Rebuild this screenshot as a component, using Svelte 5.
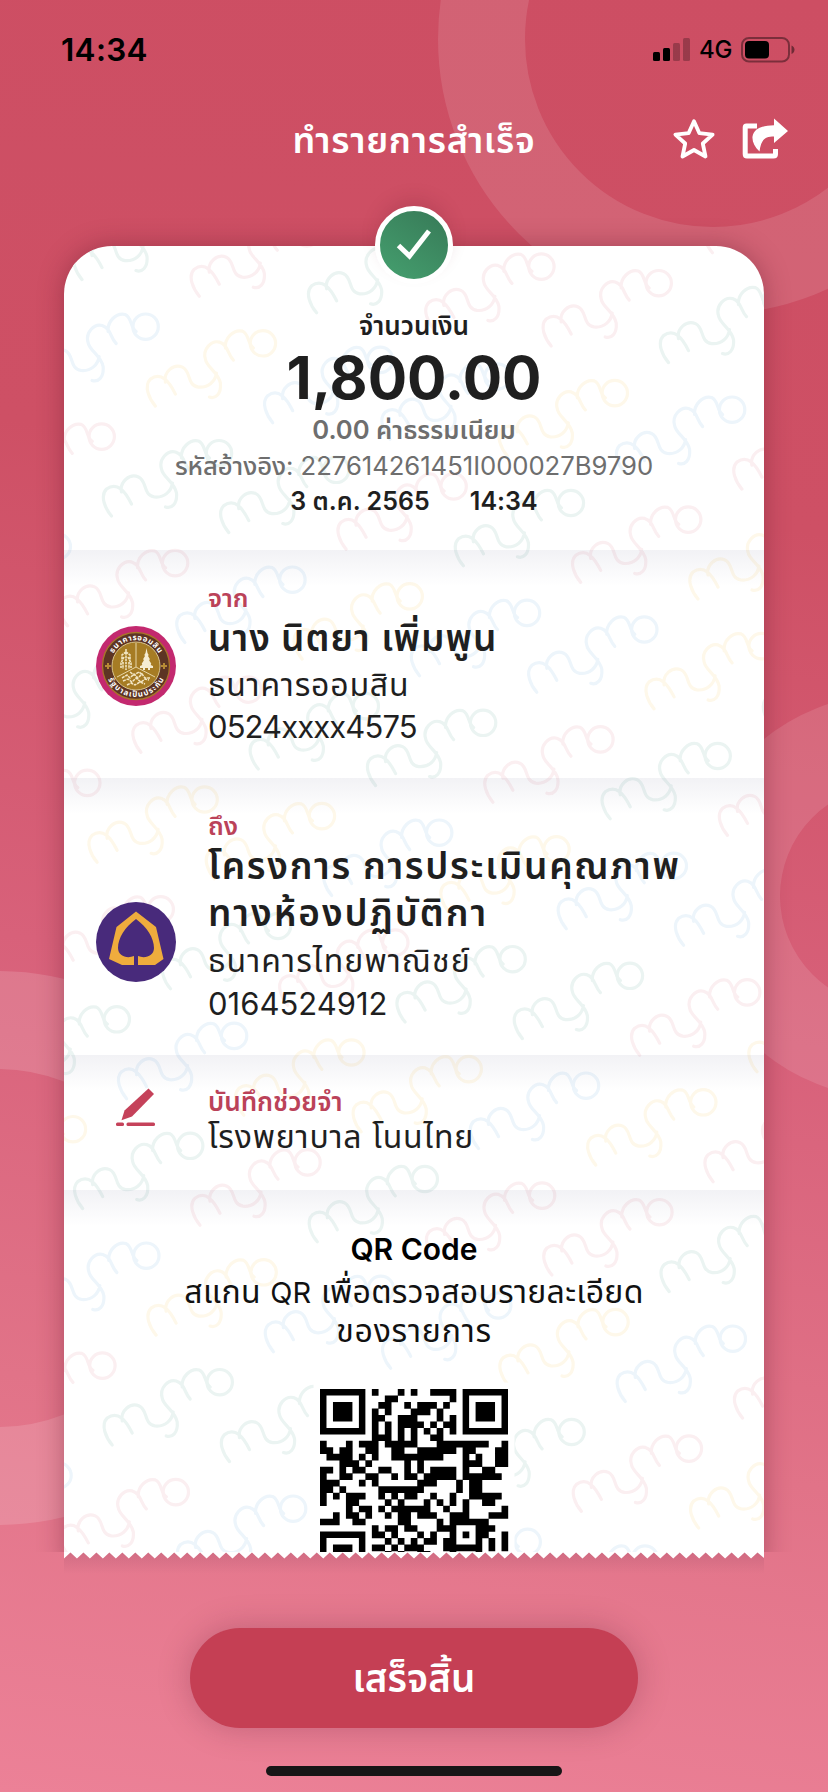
<script>
  // Watermark lattice: each mark sits at ORIGIN + m*A + n*B
  const ORIGIN = [472.8, 446.3];
  const A = [117.3, 16.6];
  const B = [-43.9, 109.9];
  const tones = { g: '#ebf4f2', p: '#fbeff1', b: '#edf5fb', y: '#fef8ea' };
  // Colour rows start at m = -7; the pattern repeats by (+3, +8)
  const toneRows = {
    '-3': 'bygpgppgby',
    '-2': 'gpbybbybpg',
    '-1': 'ygpggpgpyb',
    '0': 'ygbpbybbyg',
    '1': 'bpygpggpgp',
    '2': 'gbypyybybb',
    '3': 'ybpgpgpggp',
    '4': 'pybygbyyby'
  };
  function toneOf(m, n) {
    while (n > 4) { n -= 8; m -= 3; }
    while (n < -3) { n += 8; m += 3; }
    const row = toneRows[String(n)];
    return tones[row[(((m + 7) % 10) + 10) % 10]];
  }
  const marks = [];
  for (let n = -4; n <= 10; n++) {
    for (let m = -8; m <= 8; m++) {
      const x = ORIGIN[0] + m * A[0] + n * B[0];
      const y = ORIGIN[1] + m * A[1] + n * B[1];
      if (x > -130 && x < 720 && y > -20 && y < 1400) marks.push({ x, y, c: toneOf(m, n) });
    }
  }

  // Dark modules per row, between and beside the finder patterns
  const qrRows = [
    [8, 12, 14, 17, 18, 19, 20],
    [10, 11, 20],
    [9, 10, 13, 15, 16, 17, 19],
    [8, 10, 14, 15, 16, 18],
    [8, 9, 12, 13, 14, 18, 20],
    [8, 10, 12, 13, 14, 15, 17, 19, 20],
    [8, 10, 12, 14, 16, 18, 20],
    [8, 9, 10, 12, 14, 17, 18],
    [0, 4, 6, 7, 8, 10, 11, 12, 13, 14, 18, 19, 20, 21, 22, 23, 24, 25, 28],
    [0, 1, 3, 4, 7, 8, 11, 12, 15, 16, 17, 18, 19, 20, 22, 23, 27, 28],
    [1, 2, 3, 4, 6, 8, 11, 12, 13, 14, 15, 16, 17, 18, 22, 24, 27, 28],
    [3, 4, 5, 7, 13, 15, 22, 23, 24, 27, 28],
    [0, 1, 3, 5, 6, 9, 10, 13, 15, 17, 18, 19, 20, 22, 25, 26],
    [0, 3, 4, 7, 8, 11, 13, 14, 16, 17, 18, 19, 20, 22, 23, 24, 25, 26, 27],
    [0, 1, 2, 6, 8, 15, 16, 17, 21, 23, 24],
    [0, 1, 3, 9, 10, 11, 12, 13, 14, 15, 21, 23, 24],
    [0, 2, 4, 5, 6, 9, 11, 13, 14, 17, 20, 23, 24, 25, 26, 27],
    [0, 4, 5, 10, 12, 16, 18, 20, 22, 25, 26],
    [4, 6, 7, 9, 11, 12, 13, 14, 15, 16, 19, 22, 28],
    [2, 4, 5, 7, 10, 12, 13, 15, 16, 17, 20, 21, 22, 26, 27, 28],
    [0, 1, 2, 5, 6, 12, 13, 18, 20, 21, 22, 23, 24, 25],
    [8, 10, 11, 13, 14, 18, 19, 20, 24, 25, 26],
    [8, 9, 11, 15, 17, 20, 22, 24, 25, 28],
    [10, 12, 14, 16, 17, 19, 20, 24, 26, 28],
    [8, 9, 11, 13, 14, 15, 19, 20, 21, 22, 23, 24, 26, 28],
    [10, 12, 15, 16, 20, 24]
  ];
  const qrPath = qrRows.map((r, y) => r.map((x) => `M${x} ${y}h1.03v1.03h-1.03z`).join('')).join('');
  const finders = [[0, 0], [22, 0], [0, 22]];

  const teeth =
    'M0 0H700V6' +
    Array.from({ length: 54 }, (_, i) => {
      const right = 700 - i * 12.963;
      return `L${(right - 6.48).toFixed(2)} .6L${(right - 12.963).toFixed(2)} 6.4`;
    }).join('') +
    'Z';
</script>

<div class="screen">
  <svg class="rings" viewBox="0 0 828 1792" aria-hidden="true">
    <g fill="none" stroke="#fff" stroke-opacity=".115">
      <circle cx="713" cy="39" r="231.5" stroke-width="87" />
      <circle cx="891" cy="896" r="156.5" stroke-width="91" />
      <circle cx="-2" cy="1248" r="228" stroke-width="98" stroke-opacity=".14" />
    </g>
  </svg>

  <div class="status">
    <span class="clock">14:34</span>
    <div class="indicators">
      <svg width="38" height="24" viewBox="0 0 38 24">
        <rect x="0" y="14" width="7" height="9" rx="1.5" />
        <rect x="10" y="10" width="7" height="13" rx="1.5" />
        <rect x="20" y="5" width="7" height="18" rx="1.5" opacity=".25" />
        <rect x="30" y="0" width="7" height="23" rx="1.5" opacity=".25" />
      </svg>
      <span class="net">4G</span>
      <svg width="54" height="26" viewBox="0 0 54 26">
        <rect x="1" y="1" width="47" height="23.5" rx="7" fill="none" stroke="#000" stroke-opacity=".4" stroke-width="2" />
        <rect x="4" y="4" width="24" height="17.5" rx="4" />
        <path d="M50.500 8.500c4 1.500 4 7 0 8.500z" opacity=".45" />
      </svg>
    </div>
  </div>

  <header class="nav">
    <h1>ทำรายการสำเร็จ</h1>
    <div class="actions">
      <svg width="44" height="42" viewBox="0 0 44 42" fill="none" stroke="#fff" stroke-width="3.800" stroke-linejoin="round">
        <path d="M22 3.200L27.400 15.200L40.600 16.600L30.800 25.500L33.500 38.500L22 32L10.500 38.500L13.200 25.500L3.400 16.600L16.600 15.200Z" />
      </svg>
      <svg width="47" height="42" viewBox="0 0 47 42">
        <path d="M15 8H4.500Q3.200 8 3.200 9.500V36Q3.200 38 5 38H31.500Q33.500 38 33.500 36V31" fill="none" stroke="#fff" stroke-width="5" />
        <path d="M32 .5L46 13L32 25V18.500C24 18.500 19 20.500 17.500 33.500C12.500 29 10 23.500 10.500 18.500C12 10.500 20 7.500 32 7.300Z" fill="#fff" />
      </svg>
    </div>
  </header>

  <div class="stage">
    <div class="badge">
      <svg width="36" height="34" viewBox="0 0 36 34" fill="none" stroke="#fff" stroke-width="5">
        <path d="M2.500 17.500L13.500 28L33 3" />
      </svg>
    </div>

    <main class="card">
      <svg class="marks" width="700" height="1306" viewBox="0 0 700 1306" aria-hidden="true">
        <defs>
          <g id="mark" fill="none" stroke-width="3.200" stroke-linecap="round">
            <path d="M0 0C-6-7-12-20-5-27C6-35 14-24 20-12M10-24C8-34 18-43 27-39C36-35 31-21 43-19C53-18 60-25 61-33M50-47C51-39 63-34 65-23C66-12 60-7 54-9M50-47C47-57 56-66 64-64C73-61 72-52 78-46M70-58C69-68 78-77 87-75C94-72 92-62 98-58" />
            <circle cx="107.500" cy="-62.800" r="12.700" />
          </g>
        </defs>
        {#each marks as k}
          <use href="#mark" x={k.x} y={k.y} stroke={k.c} />
        {/each}
      </svg>

      <section class="summary">
        <p class="label">จำนวนเงิน</p>
        <p class="amount">1,800.00</p>
        <p class="fee">0.00 ค่าธรรมเนียม</p>
        <p class="ref"><b>รหัสอ้างอิง</b>: 227614261451I000027B9790</p>
        <p class="date"><span>3 ต.ค. 2565</span><span>14:34</span></p>
      </section>

      <section class="row from">
        <div class="logo">
          <svg width="80" height="80" viewBox="0 0 80 80">
            <defs>
              <path id="arcTop" d="M14 40A26 26 0 0 1 66 40" />
              <path id="arcBottom" d="M9 40A31 31 0 0 0 71 40" />
            </defs>
            <circle cx="40" cy="40" r="40" fill="#c3296f" />
            <circle cx="40" cy="40" r="33.500" fill="#5d3424" stroke="#a87528" stroke-width="1.300" />
            <circle cx="40" cy="40" r="24" fill="#a67c24" stroke="#d8c48e" stroke-width="1" />
            <path d="M40 17V41M40 41L21 51M40 41L59 51" stroke="#e6d6a8" stroke-width="1" fill="none" />
            <g fill="#f5ecd2">
              <path d="M50.500 22l1 5 1.200 2-.7 1 1.800 3-.6 1.500 2 3-.5 1.500 2.300 1v2H54l0 2h-2v-2h-3v2h-2v-2h-3v-2l2.300-1-.5-1.500 2-3-.6-1.500 1.800-3-.7-1 1.200-2z" />
            </g>
            <path d="M30 23v21M30 26l-4 3v5M30 26l4 3v5M28 31l-3 6v5M32 31l3 6v5M27 36v7M33 36v7" stroke="#f0e4c0" stroke-width="1.600" stroke-dasharray="2.500 .7" fill="none" />
            <path d="M26 52l5-3 3 3 4-4 4 4 4-4 3 4 5 0M27 55l5-2 4 3 4-4 5 4 4-3 4 1M31 59l4-2 4 2 5-3 5 2M34 46l4 3 5-3 4 3" stroke="#f2e6c4" stroke-width="1.500" stroke-dasharray="3 .8" fill="none" />
            <path d="M12 37v6M9 40h6M68 37v6M65 40h6" stroke="#b78a35" stroke-width="2" />
            <g class="seal">
              <text><textPath href="#arcTop" startOffset="50%" text-anchor="middle" textLength="55">ธนาคารออมสิน</textPath></text>
              <text><textPath href="#arcBottom" startOffset="50%" text-anchor="middle" textLength="70">รัฐบาลเป็นประกัน</textPath></text>
            </g>
          </svg>
        </div>
        <div class="info">
          <p class="tag">จาก</p>
          <p class="name last-name">นาง นิตยา เพิ่มพูน</p>
          <p class="bank">ธนาคารออมสิน</p>
          <p class="acct masked">0524xxxx4575</p>
        </div>
      </section>

      <section class="row to">
        <div class="logo">
          <svg width="80" height="80" viewBox="0 0 80 80">
            <circle cx="40" cy="40" r="40" fill="#482a7b" />
            <path fill="#efac3d" d="M40 9.500L60 25L67.500 57L59 63H42V54C49 57 58 54 58 46C58 36 51 25 40 17C29 25 22 36 22 46C22 54 31 57 38 54V63H26L13 57L20.500 25Z" />
          </svg>
        </div>
        <div class="info">
          <p class="tag">ถึง</p>
          <p class="name long">โครงการ การประเมินคุณภาพ</p>
          <p class="name second last-name">ทางห้องปฏิบัติกา</p>
          <p class="bank scb">ธนาคารไทยพาณิชย์</p>
          <p class="acct plain">0164524912</p>
        </div>
      </section>

      <section class="row note">
        <div class="pen">
          <svg width="40" height="40" viewBox="0 0 40 40" fill="#c5425a">
            <path d="M32.500 .5L38 6L16 28.500L5.500 32.300L8.500 22.500Z" />
            <rect x="0" y="34.500" width="8" height="3.500" rx="1.500" />
            <rect x="10.500" y="34.500" width="28.500" height="3.500" rx="1.500" />
          </svg>
        </div>
        <div class="info">
          <p class="tag memo">บันทึกช่วยจำ</p>
          <p class="memo-text">โรงพยาบาล โนนไทย</p>
        </div>
      </section>

      <section class="qr">
        <h2>QR Code</h2>
        <p class="scan">สแกน <span>QR</span> เพื่อตรวจสอบรายละเอียด</p>
        <p class="scan last">ของรายการ</p>
        <svg class="code" width="188" height="188" viewBox="0 0 29 29">
          <rect x="-1" y="-1" width="31" height="31" fill="#fff" />
          {#each finders as [x, y]}
            <path fill-rule="evenodd" d={`M${x} ${y}h7v7h-7zM${x + 1} ${y + 1}v5h5v-5zM${x + 2} ${y + 2}h3v3h-3z`} />
          {/each}
          <path d={qrPath} />
        </svg>
      </section>
    </main>
  </div>

  <footer>
    <div class="tear">
      <svg width="700" height="8" viewBox="0 0 700 8"><path d={teeth} fill="#fff" /></svg>
    </div>
    <button type="button">เสร็จสิ้น</button>
    <div class="home"></div>
  </footer>
</div>

<style>
  :global(body) { margin: 0; }
  p, h1, h2 { margin: 0; white-space: nowrap; }
  svg { display: block; }
  .screen {
    position: relative;
    width: 828px;
    height: 1792px;
    overflow: hidden;
    display: flex;
    flex-direction: column;
    background: linear-gradient(188deg, #cd4e63 0%, #ce5065 28%, #d8617a 55%, #e17388 78%, #ec8197 100%);
    font-family: Inter, 'Noto Sans Thai', 'Noto Sans', sans-serif;
    color: #1f1f1f;
  }
  .rings { position: absolute; inset: 0; width: 828px; height: 1792px; }
  .status {
    position: relative;
    height: 100px;
    box-sizing: border-box;
    padding: 0 33px 0 61px;
    display: flex;
    justify-content: space-between;
    align-items: center;
    color: #000;
  }
  .clock { font-size: 31.500px; font-weight: 600; line-height: 40px; letter-spacing: .3px; }
  .indicators { display: flex; align-items: center; }
  .net { font-size: 24px; font-weight: 500; width: 34px; margin: 0 8px; line-height: 30px; letter-spacing: -.2px; }
  .nav { position: relative; height: 80px; display: flex; justify-content: center; align-items: center; }
  h1 { font-size: 36px; font-weight: 600; line-height: 60px; letter-spacing: .7px; color: #fff; }
  .actions { position: absolute; right: 39px; top: 18px; display: flex; gap: 26px; }
  .stage { position: relative; height: 1372px; padding: 66px 64px 0; overflow: hidden; box-sizing: border-box; }
  .badge {
    position: absolute; z-index: 2; left: 375px; top: 26px;
    width: 68px; height: 68px;
    border: 5.500px solid #fff; border-radius: 50%;
    background: linear-gradient(215deg, #377957, #45a06f);
    display: flex; align-items: center; justify-content: center;
    box-shadow: 0 -6px 22px rgba(120, 30, 50, .25);
    clip-path: inset(-40px -40px 40px -40px);
  }
  .badge { clip-path: none; box-shadow: 0 -10px 18px -4px rgba(120, 30, 50, .22); }
  .card {
    position: relative;
    height: 1320px;
    background: #fff;
    border-radius: 48px 48px 0 0;
    box-shadow: 0 0 26px rgba(90, 20, 40, .38);
  }
  .marks { position: absolute; left: 0; top: 0; border-radius: 48px 48px 0 0; }
  section { position: relative; box-sizing: border-box; }
  .summary { height: 304px; padding-top: 62px; text-align: center; }
  .label { font-size: 26px; font-weight: 600; line-height: 36px; }
  .amount { font-size: 58.500px; font-weight: 700; line-height: 68px; }
  .fee { font-size: 25.600px; font-weight: 600; line-height: 36px; color: #6e6e6e; }
  .ref { font-size: 25.700px; line-height: 35px; color: #6e6e6e; letter-spacing: -.05px; }
  .ref b { font-weight: 500; }
  .date { font-size: 25px; font-weight: 600; line-height: 37px; display: flex; justify-content: center; gap: 40px; letter-spacing: .05px; }
  .row, .qr { background: linear-gradient(rgba(60, 60, 110, .065), rgba(60, 60, 110, 0) 36px); }
  .row { display: grid; grid-template-columns: 144px 1fr; }
  .from { height: 228px; padding-top: 30px; }
  .to { height: 277px; padding-top: 29px; }
  .note { height: 135px; padding-top: 28px; }
  .logo { padding-left: 32px; }
  .from .logo { padding-top: 46px; }
  .to .logo { padding-top: 95px; }
  .pen { padding: 5px 0 0 52px; }
  .seal { font-size: 7.800px; font-weight: 700; fill: #fff; }
  .tag { font-size: 25.500px; font-weight: 600; line-height: 36px; margin-bottom: -2px; color: #bb4259; }
  .to .tag, .note .tag { line-height: 37px; }
  .note .tag { margin-bottom: 0; font-size: 26px; }
  .name { font-size: 37px; font-weight: 600; line-height: 48px; letter-spacing: 1px; }
  .last-name { margin-bottom: 2px; }
  .long { letter-spacing: 1.700px; }
  .second { letter-spacing: 2px; margin-top: -1px; margin-bottom: 3px; }
  .bank { font-size: 32px; line-height: 42px; letter-spacing: .8px; }
  .scb { letter-spacing: 1.100px; }
  .acct { font-size: 31px; line-height: 41px; }
  .masked { letter-spacing: -.9px; }
  .plain { line-height: 43px; }
  .memo-text { font-size: 32px; line-height: 34px; letter-spacing: .8px; }
  .qr { padding-top: 40px; display: flex; flex-direction: column; align-items: center; color: #111; }
  h2 { font-size: 30px; font-weight: 600; line-height: 38px; color: #000; }
  .scan { font-size: 32px; line-height: 48px; letter-spacing: .3px; }
  .scan span { font-size: 29px; }
  .last { line-height: 28px; letter-spacing: .8px; }
  .code { margin-top: 44px; overflow: visible; }
  footer { position: relative; height: 240px; display: flex; flex-direction: column; align-items: center; }
  .tear { width: 700px; height: 22px; background: linear-gradient(rgba(110, 50, 80, .17), rgba(110, 50, 80, 0)); }
  button {
    margin-top: 54px; width: 448px; height: 100px; padding: 0;
    border: 0; border-radius: 50px; background: #c53f54; color: #fff;
    font: 600 38.500px/100px Inter, 'Noto Sans Thai', 'Noto Sans', sans-serif;
    box-shadow: 0 0 32px rgba(90, 30, 50, .28);
  }
  .home { margin-top: 38px; width: 296px; height: 10px; border-radius: 5px; background: #171516; }
</style>
